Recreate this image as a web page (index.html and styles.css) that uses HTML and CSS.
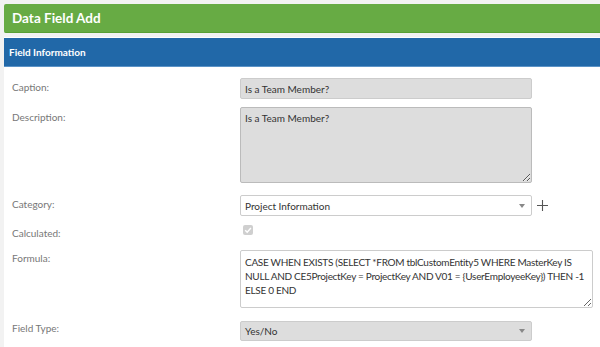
FILE: index.html
```html
<!DOCTYPE html>
<html lang="en">
<head>
    <meta charset="UTF-8">
    <meta name="viewport" content="width=device-width, initial-scale=1.0">
    <title>Data Field Add</title>
    <link rel="stylesheet" href="styles.css">
</head>
<body>
    <div class="page">
        <div class="title-bar">Data Field Add</div>

        <div class="panel">
            <div class="panel-head">Field Information</div>
            <div class="panel-body">
                <div class="row row-caption">
                    <label for="caption">Caption:</label>
                    <input type="text" id="caption" class="field field-ro" value="Is a Team Member?" readonly>
                </div>
                <div class="row row-desc">
                    <label for="descricao">Description:</label>
                    <textarea id="descricao" class="field field-ro area-desc" readonly>Is a Team Member?</textarea>
                </div>
                <div class="row row-cat">
                    <label>Category:</label>
                    <div class="with-add">
                        <div class="select">
                            <span>Project Information</span>
                            <span class="caret"></span>
                        </div>
                        <svg class="add" width="11" height="11" viewBox="0 0 11 11"><path d="M5.5 0 V11 M0 5.5 H11" stroke="#555" stroke-width="1.1"/></svg>
                    </div>
                </div>
                <div class="row row-calc">
                    <label>Calculated:</label>
                    <span class="check">
                        <svg width="10" height="10" viewBox="0 0 10 10"><path d="M2.2 5.2 L4.2 7.2 L7.9 3" fill="none" stroke="#fff" stroke-width="1.4"/></svg>
                    </span>
                </div>
                <div class="row row-formula">
                    <label for="formula">Formula:</label>
                    <textarea id="formula" class="field area-formula">CASE WHEN EXISTS (SELECT *FROM tblCustomEntity5 WHERE MasterKey IS
NULL AND CE5ProjectKey = ProjectKey AND V01 = {UserEmployeeKey}) THEN -1
ELSE 0 END</textarea>
                </div>
                <div class="row row-type">
                    <label>Field Type:</label>
                    <div class="select select-ro">
                        <span>Yes/No</span>
                        <span class="caret"></span>
                    </div>
                </div>
            </div>
        </div>
    </div>
</body>
</html>
```

FILE: styles.css
```css
body {
    margin: 0;
    font-family: Lato, "Open Sans", sans-serif;
    background-color: #f2f2f2;
    color: #333;
}
.page {
    padding: 4px 0 0 4px;
}
.title-bar {
    height: 28px;
    line-height: 28px;
    background-color: #67ab44;
    border-bottom: 1px solid #58a035;
    color: #fff;
    font-size: 13.5px;
    font-weight: 700;
    padding-left: 8px;
    border-radius: 2px 0 0 2px;
}
.panel {
    margin-top: 4px;
    background-color: #fff;
    border-top: 1px solid #fff;
}
.panel-head {
    height: 28px;
    line-height: 29px;
    background-color: #2168a8;
    border-bottom: 1px solid #5b93c7;
    color: #fff;
    font-size: 10px;
    font-weight: 700;
    padding-left: 5px;
}
.panel-body {
    padding: 11px 0 10px 8px;
}
.row {
    display: grid;
    grid-template-columns: 228px 1fr;
    align-items: start;
}
.row label {
    font-size: 10px;
    line-height: 14px;
    color: #777;
    padding-top: 2px;
}
.field {
    box-sizing: border-box;
    font-family: inherit;
    font-size: 10px;
    line-height: 14px;
    color: #333;
    border: 1px solid #ccc;
    border-radius: 2px;
    padding: 3px 4px;
    margin: 0;
    outline: none;
}
.field-ro {
    background-color: #dddddd;
}
input.field {
    width: 292px;
    height: 21px;
}
textarea.field {
    display: block;
}
.area-desc {
    width: 292px;
    height: 76px;
    border-color: #bbb;
}
.area-formula {
    width: 353px;
    height: 58px;
    background-color: #fff;
    padding: 4px 0 3px 4px;
    letter-spacing: -0.3px;
}
.row-caption {
    margin-bottom: 8px;
}
.row-desc {
    margin-bottom: 12px;
}
.row-desc label {
    padding-top: 3px;
}
.row-cat {
    margin-bottom: 9px;
}
.row-calc {
    margin-bottom: 10px;
}
.row-calc label {
    padding-top: 1px;
}
.row-formula {
    margin-bottom: 13px;
}
.row-formula label {
    padding-top: 1px;
}
.row-type label {
    padding-top: 0;
}
.with-add {
    display: flex;
    align-items: center;
    gap: 5px;
}
.select {
    box-sizing: border-box;
    width: 292px;
    height: 21px;
    border: 1px solid #ccc;
    border-radius: 2px;
    background-color: #fff;
    display: flex;
    align-items: center;
    justify-content: space-between;
    padding: 0 6px 0 4px;
    font-size: 10px;
    color: #333;
}
.select-ro {
    background-color: #dddddd;
    height: 20px;
}
.caret {
    width: 0;
    height: 0;
    border-left: 3.5px solid transparent;
    border-right: 3.5px solid transparent;
    border-top: 4px solid #888;
}
.add {
    display: block;
    margin-top: -1px;
}
.check {
    display: block;
    width: 10px;
    height: 10px;
    margin-left: 3px;
    background-color: #cfcfcf;
    border-radius: 2px;
}
.check svg {
    display: block;
}
```
